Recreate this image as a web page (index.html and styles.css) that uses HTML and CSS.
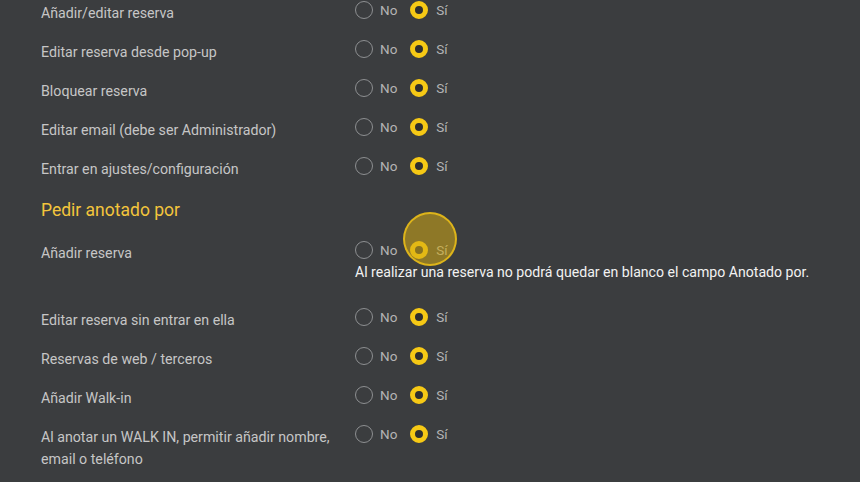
FILE: index.html
```html
<!DOCTYPE html>
<html lang="es">
<head>
<meta charset="utf-8">
<link rel="stylesheet" href="styles.css">
</head>
<body>
<div class="page">
  <div class="row">
    <div class="label">Añadir/editar reserva</div>
    <div class="opts"><span class="radio"></span><span class="opt">No</span><span class="radio on"></span><span class="opt">Sí</span></div>
  </div>
  <div class="row">
    <div class="label">Editar reserva desde pop-up</div>
    <div class="opts"><span class="radio"></span><span class="opt">No</span><span class="radio on"></span><span class="opt">Sí</span></div>
  </div>
  <div class="row">
    <div class="label">Bloquear reserva</div>
    <div class="opts"><span class="radio"></span><span class="opt">No</span><span class="radio on"></span><span class="opt">Sí</span></div>
  </div>
  <div class="row">
    <div class="label">Editar email (debe ser Administrador)</div>
    <div class="opts"><span class="radio"></span><span class="opt">No</span><span class="radio on"></span><span class="opt">Sí</span></div>
  </div>
  <div class="row">
    <div class="label">Entrar en ajustes/configuración</div>
    <div class="opts"><span class="radio"></span><span class="opt">No</span><span class="radio on"></span><span class="opt">Sí</span></div>
  </div>

  <h2 class="section">Pedir anotado por</h2>

  <div class="row row-note">
    <div class="label">Añadir reserva</div>
    <div class="opts-wrap">
      <div class="opts"><span class="radio"></span><span class="opt">No</span><span class="radio on"></span><span class="opt dim">Sí</span><span class="click"></span></div>
      <div class="note">Al realizar una reserva no podrá quedar en blanco el campo Anotado por.</div>
    </div>
  </div>
  <div class="row">
    <div class="label">Editar reserva sin entrar en ella</div>
    <div class="opts"><span class="radio"></span><span class="opt">No</span><span class="radio on"></span><span class="opt">Sí</span></div>
  </div>
  <div class="row">
    <div class="label">Reservas de web / terceros</div>
    <div class="opts"><span class="radio"></span><span class="opt">No</span><span class="radio on"></span><span class="opt">Sí</span></div>
  </div>
  <div class="row">
    <div class="label">Añadir Walk-in</div>
    <div class="opts"><span class="radio"></span><span class="opt">No</span><span class="radio on"></span><span class="opt">Sí</span></div>
  </div>
  <div class="row row-last">
    <div class="label">Al anotar un WALK IN, permitir añadir nombre, email o teléfono</div>
    <div class="opts"><span class="radio"></span><span class="opt">No</span><span class="radio on"></span><span class="opt">Sí</span></div>
  </div>
</div>
</body>
</html>
```
FILE: styles.css
```css
html, body {
  margin: 0;
  padding: 0;
  background: #3b3d3f;
}
body {
  font-family: Roboto, "Liberation Sans", Arial, sans-serif;
  color: #c6c6c6;
}
.page {
  padding-left: 41px;
}
.row {
  display: grid;
  grid-template-columns: 314px auto;
  height: 39px;
}
.row-note {
  height: 67px;
}
.row-last {
  height: auto;
}
.label {
  font-size: 14.2px;
  line-height: 22px;
  padding-top: 2px;
  color: #c6c6c6;
}
.opts {
  position: relative;
  display: flex;
  align-items: center;
  height: 18px;
  margin-top: 1px;
}
.radio {
  box-sizing: border-box;
  width: 18px;
  height: 18px;
  border-radius: 50%;
  border: 1.5px solid #8d8f91;
  flex: none;
}
.radio.on {
  border: 5px solid #f6c915;
  background: #2e2f30;
  margin-left: 13px;
}
.opt {
  font-size: 13.5px;
  margin-left: 7px;
  color: #b4b4b4;
}
.radio.on + .opt {
  margin-left: 8px;
}
.section {
  margin: 3px 0 18px;
  font-size: 17.5px;
  line-height: 24px;
  font-weight: 400;
  color: #f3c53c;
}
.note {
  margin-top: 3px;
  font-size: 14.1px;
  line-height: 20px;
  color: #f2f2f2;
}
.click {
  position: absolute;
  left: 48px;
  top: -29px;
  width: 54px;
  height: 54px;
  box-sizing: border-box;
  border-radius: 50%;
  background: rgba(212, 170, 20, 0.55);
  border: 2px solid rgba(235, 190, 25, 0.85);
}
```
